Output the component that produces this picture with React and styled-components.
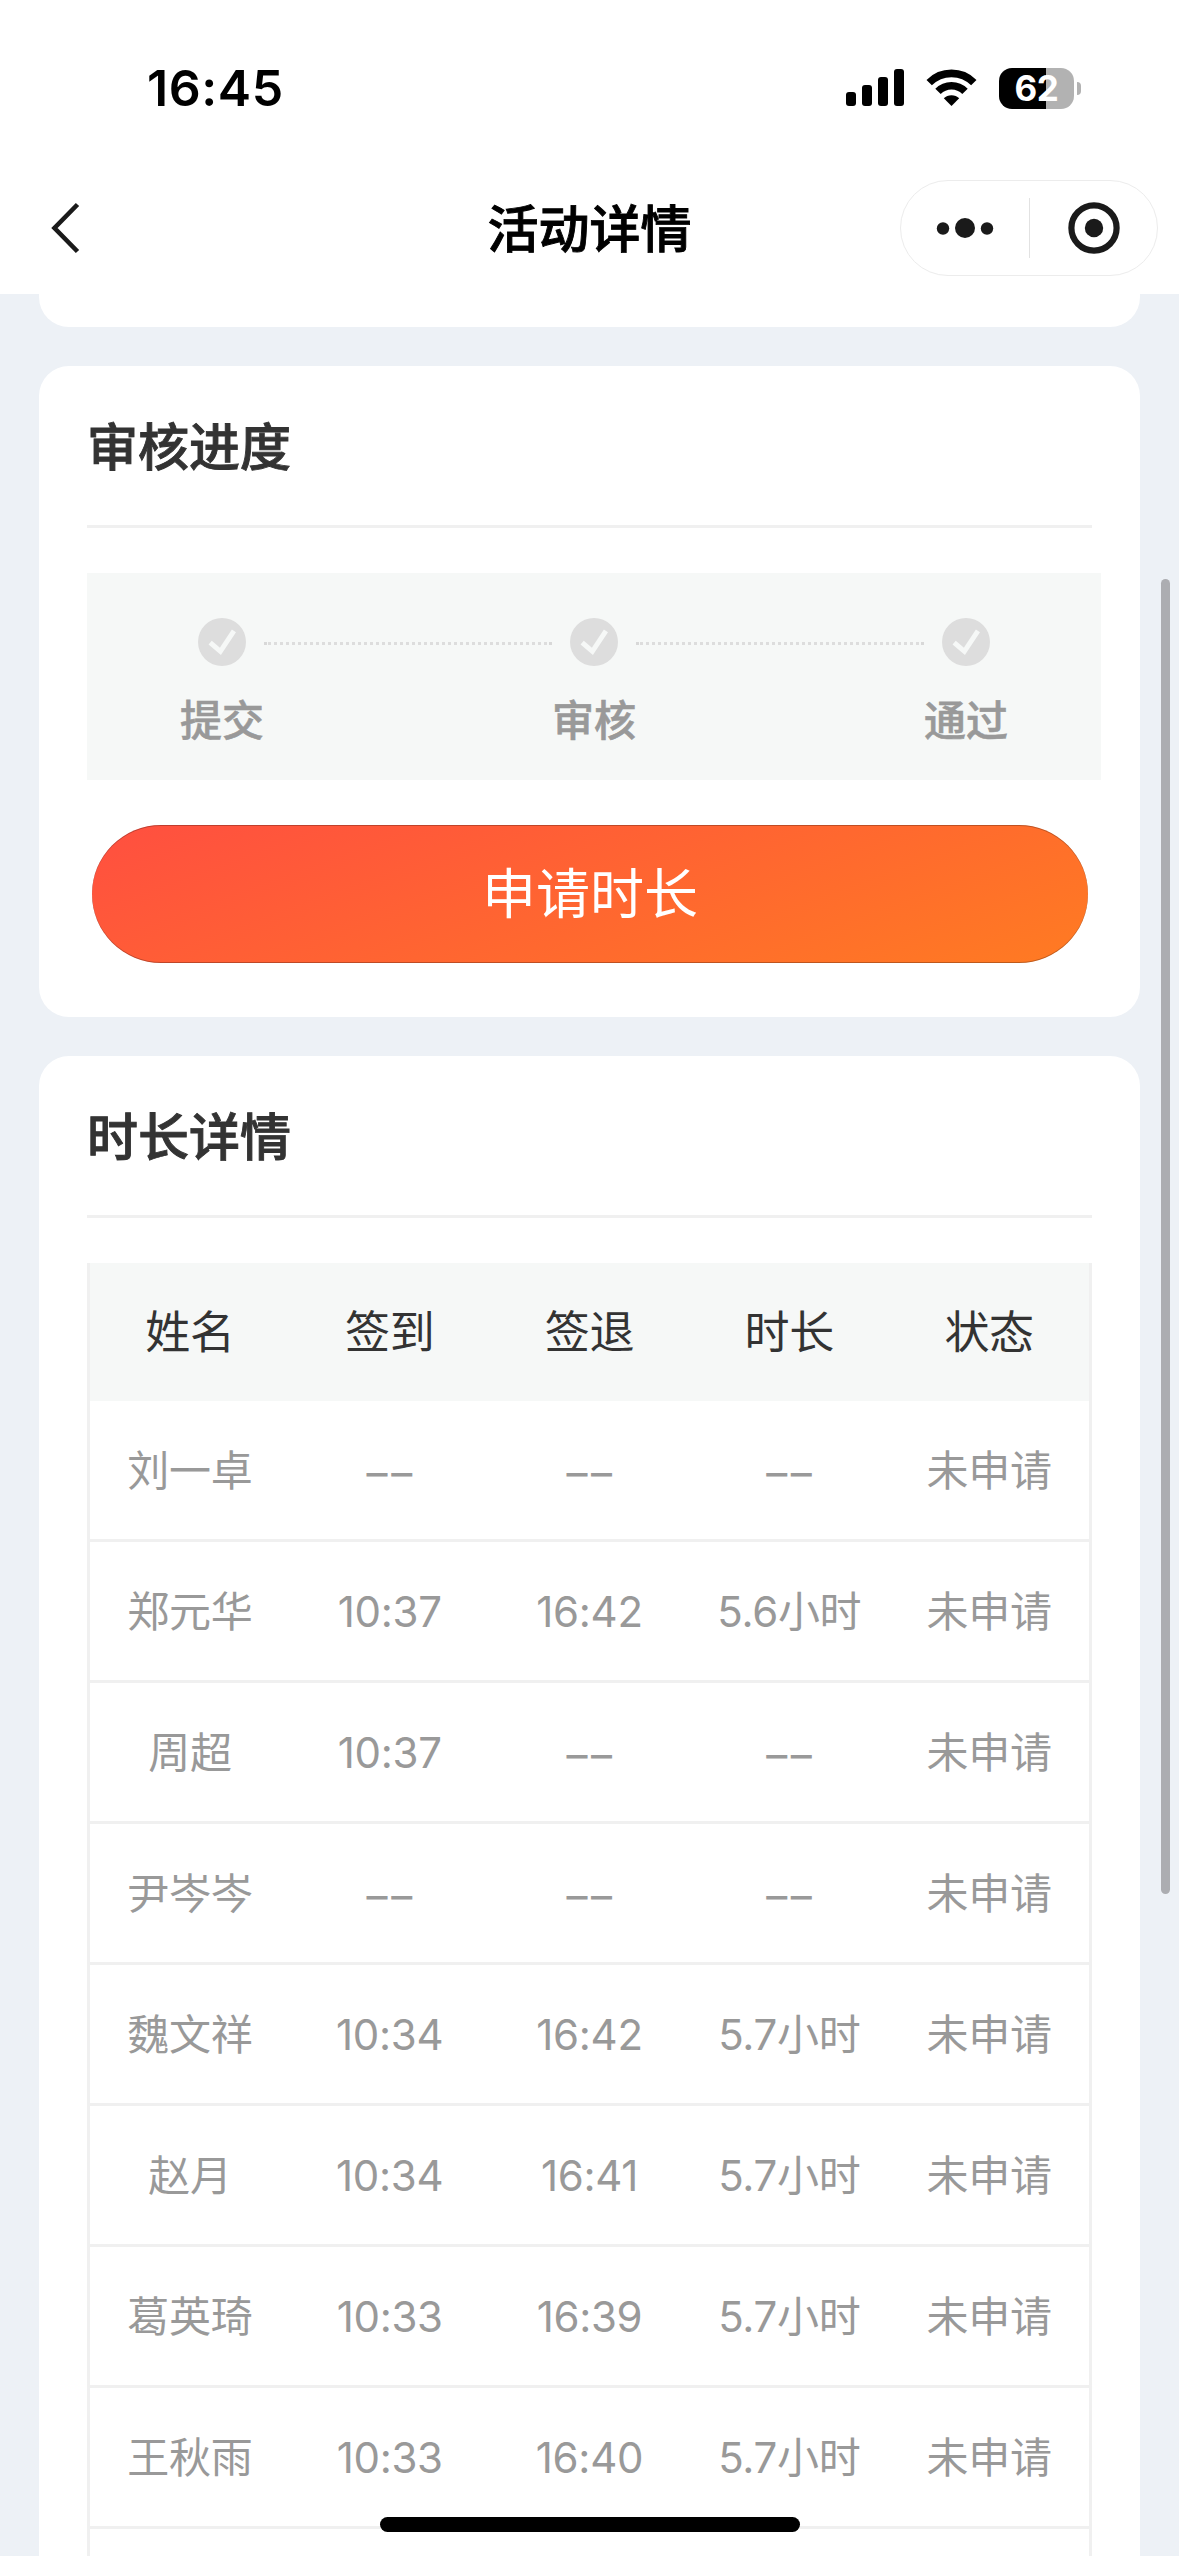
import React from "react";
import styled, { createGlobalStyle } from "styled-components";

const GlobalStyle = createGlobalStyle`
  * { box-sizing: border-box; }
  body {
    margin: 0;
    background: #edf1f6;
    font-family: Inter, "Noto Sans CJK SC", sans-serif;
  }
`;

const Screen = styled.div`
  position: relative;
  width: 1179px;
  height: 2556px;
  overflow: hidden;
  display: flex;
  flex-direction: column;
  background: #edf1f6;
`;

const Header = styled.header`
  flex: none;
  height: 294px;
  background: #fff;
`;

const StatusBar = styled.div`
  display: flex;
  align-items: center;
  justify-content: space-between;
  height: 176px;
  padding: 0 98px 0 147px;
`;

const Clock = styled.span`
  font-size: 50px;
  font-weight: 600;
  line-height: 60px;
  letter-spacing: 0.6px;
  color: #000;
`;

const StatusIcons = styled.div`
  display: flex;
  align-items: center;
  gap: 22px;
`;

const BatteryWrap = styled.div`
  display: flex;
  align-items: center;
  gap: 3px;
`;

const BatteryBody = styled.div`
  width: 75px;
  height: 41px;
  border-radius: 13px;
  display: flex;
  align-items: center;
  justify-content: center;
  background: linear-gradient(90deg, #000 47px, #b2b2b2 47px);
  color: #fff;
  font-size: 35px;
  font-weight: 700;
  line-height: 41px;
  letter-spacing: -0.5px;
`;

const BatteryTip = styled.div`
  width: 4px;
  height: 13px;
  border-radius: 0 4px 4px 0;
  background: #b2b2b2;
`;

const NavBar = styled.nav`
  display: grid;
  grid-template-columns: 1fr auto 1fr;
  align-items: center;
  height: 104px;
  padding: 0 21px;
`;

const BackButton = styled.button`
  display: flex;
  margin-left: 27px;
  padding: 0;
  border: 0;
  background: none;
`;

const NavTitle = styled.h1`
  margin: 0;
  padding-top: 4px;
  font-size: 51px;
  font-weight: 500;
  line-height: 60px;
  color: #000;
  -webkit-text-stroke: 0.9px #000;
`;

const Capsule = styled.div`
  justify-self: end;
  display: flex;
  align-items: center;
  width: 258px;
  height: 96px;
  border: 1px solid #ececec;
  border-radius: 48px;
`;

const CapsuleButton = styled.button`
  flex: 1;
  display: flex;
  align-items: center;
  justify-content: center;
  padding: 0 0 0 1px;
  border: 0;
  background: none;
`;

const CapsuleDivider = styled.span`
  width: 1px;
  height: 60px;
  background: #e2e2e2;
`;

const Content = styled.main`
  flex: 1;
  min-height: 0;
  display: flex;
  flex-direction: column;
  gap: 39px;
  padding: 0 39px;
`;

const Card = styled.section`
  flex: none;
  padding: 0 48px 54px;
  border-radius: 30px;
  background: #fff;
`;

const CardTail = styled.div`
  flex: none;
  height: 33px;
  border-radius: 0 0 30px 30px;
  background: #fff;
`;

const CardTitle = styled.h2`
  height: 162px;
  margin: 0 0 45px;
  border-bottom: 3px solid #f0f0f0;
  font-size: 51px;
  font-weight: 500;
  line-height: 164px;
  color: #333;
  -webkit-text-stroke: 0.9px #333;
`;

const Steps = styled.div`
  display: flex;
  justify-content: center;
  width: 1014px;
  height: 207px;
  padding-top: 45px;
  background: #f6f8f7;
`;

const Step = styled.div`
  display: flex;
  flex-direction: column;
  align-items: center;
  gap: 25px;
  width: 84px;
`;

const StepLabel = styled.span`
  font-size: 42px;
  font-weight: 500;
  line-height: 60px;
  color: #999;
  -webkit-text-stroke: 0.6px #999;
`;

const StepLine = styled.div`
  width: 288px;
  height: 3px;
  margin-top: 24px;
  background:
    linear-gradient(#d8d8d8, #d8d8d8) left / 3px 3px no-repeat,
    linear-gradient(#d8d8d8, #d8d8d8) right / 3px 3px no-repeat,
    repeating-linear-gradient(90deg, #ddd 0 1.5px, transparent 1.5px 4.5px, #ddd 4.5px 6px);
`;

const ApplyButton = styled.button`
  display: block;
  width: 996px;
  height: 138px;
  margin: 45px 0 0 5px;
  padding: 0;
  border: 0;
  border-radius: 69px;
  background: linear-gradient(160deg, #ff4f40, #ff7b22);
  box-shadow:
    inset 0 1px 0 rgba(0, 0, 0, 0.25),
    inset 0 -1px 0 rgba(0, 0, 0, 0.25);
  color: #fff;
  font-family: inherit;
  font-size: 54px;
  line-height: 140px;
`;

const Table = styled.div`
  border: solid #f0f0f0;
  border-width: 0 3px;
`;

const Row = styled.div`
  display: grid;
  grid-template-columns: repeat(5, 1fr);
  height: ${(p) => (p.$head ? 138 : 141)}px;
  border-bottom: ${(p) => (p.$head ? "0" : "3px solid #f0f0f0")};
  background: ${(p) => (p.$head ? "#f6f8f7" : "#fff")};
  color: ${(p) => (p.$head ? "#333" : "#999")};
  font-size: ${(p) => (p.$head ? 45 : 42)}px;
  line-height: 140px;
  text-align: center;
`;

const Cell = styled.span`
  padding: ${(p) => (p.$empty ? "2px 0 0 3px" : "0")};
  letter-spacing: ${(p) => (p.$empty ? "3.6px" : "-0.3px")};
  white-space: nowrap;
`;

const ScrollThumb = styled.div`
  position: absolute;
  top: 579px;
  right: 9px;
  width: 9px;
  height: 1315px;
  border-radius: 5px;
  background: #acadb1;
`;

const HomeIndicator = styled.div`
  position: absolute;
  left: 380px;
  bottom: 24px;
  width: 420px;
  height: 15px;
  border-radius: 8px;
  background: #000;
`;

const SignalIcon = () => (
  <svg width="58" height="38" viewBox="0 0 58 38">
    <rect x="0" y="23" width="10" height="14" rx="3" />
    <rect x="16" y="16" width="10" height="21" rx="3" />
    <rect x="32" y="8" width="10" height="29" rx="3" />
    <rect x="48" y="0" width="10" height="37" rx="3" />
  </svg>
);

const WifiIcon = () => (
  <svg width="51" height="38" viewBox="0 0 51 38">
    <g fill="none" stroke="#000" strokeWidth="7.6">
      <path d="M3.2 13.6 A31.5 31.5 0 0 1 47.8 13.6" />
      <path d="M12 22.4 A19 19 0 0 1 39 22.4" />
    </g>
    <path d="M25.5 37 L17.8 29.3 A11 11 0 0 1 33.2 29.3 Z" />
  </svg>
);

const BackIcon = () => (
  <svg width="34" height="54" viewBox="0 0 34 54">
    <path d="M29.5 3.5 L6.5 27 L29.5 50.5" fill="none" stroke="#1a1a1a" strokeWidth="4.6" />
  </svg>
);

const MoreIcon = () => (
  <svg width="58" height="22" viewBox="0 0 58 22" fill="#1a1a1a">
    <circle cx="7" cy="11.5" r="6.2" />
    <circle cx="29" cy="11" r="10" />
    <circle cx="51" cy="11.5" r="6.2" />
  </svg>
);

const TargetIcon = () => (
  <svg width="52" height="52" viewBox="0 0 52 52">
    <circle cx="26" cy="26" r="22.6" fill="none" stroke="#1a1a1a" strokeWidth="6.2" />
    <circle cx="26" cy="26" r="9.2" fill="#1a1a1a" />
  </svg>
);

const CheckIcon = () => (
  <svg width="48" height="48" viewBox="0 0 48 48">
    <circle cx="24" cy="24" r="24" fill="#ddd" />
    <path
      d="M14 26.2 L22.4 33.4 L34.6 15"
      fill="none"
      stroke="#f6f8f7"
      strokeWidth="4.9"
      strokeLinecap="square"
    />
  </svg>
);

const EMPTY = "––";
const steps = ["提交", "审核", "通过"];
const columns = ["姓名", "签到", "签退", "时长", "状态"];
const records = [
  ["刘一卓", EMPTY, EMPTY, EMPTY, "未申请"],
  ["郑元华", "10:37", "16:42", "5.6小时", "未申请"],
  ["周超", "10:37", EMPTY, EMPTY, "未申请"],
  ["尹岑岑", EMPTY, EMPTY, EMPTY, "未申请"],
  ["魏文祥", "10:34", "16:42", "5.7小时", "未申请"],
  ["赵月", "10:34", "16:41", "5.7小时", "未申请"],
  ["葛英琦", "10:33", "16:39", "5.7小时", "未申请"],
  ["王秋雨", "10:33", "16:40", "5.7小时", "未申请"],
];

export default function App() {
  return (
    <Screen>
      <GlobalStyle />
      <Header>
        <StatusBar>
          <Clock>16:45</Clock>
          <StatusIcons>
            <SignalIcon />
            <WifiIcon />
            <BatteryWrap>
              <BatteryBody>62</BatteryBody>
              <BatteryTip />
            </BatteryWrap>
          </StatusIcons>
        </StatusBar>
        <NavBar>
          <BackButton aria-label="返回">
            <BackIcon />
          </BackButton>
          <NavTitle>活动详情</NavTitle>
          <Capsule>
            <CapsuleButton aria-label="更多">
              <MoreIcon />
            </CapsuleButton>
            <CapsuleDivider />
            <CapsuleButton aria-label="关闭">
              <TargetIcon />
            </CapsuleButton>
          </Capsule>
        </NavBar>
      </Header>
      <Content>
        <CardTail />
        <Card>
          <CardTitle>审核进度</CardTitle>
          <Steps>
            {steps.map((label, i) => (
              <React.Fragment key={label}>
                {i > 0 && <StepLine />}
                <Step>
                  <CheckIcon />
                  <StepLabel>{label}</StepLabel>
                </Step>
              </React.Fragment>
            ))}
          </Steps>
          <ApplyButton>申请时长</ApplyButton>
        </Card>
        <Card>
          <CardTitle>时长详情</CardTitle>
          <Table>
            <Row $head>
              {columns.map((name) => (
                <Cell key={name}>{name}</Cell>
              ))}
            </Row>
            {records.map((record) => (
              <Row key={record[0]}>
                {record.map((value, i) => (
                  <Cell key={i} $empty={value === EMPTY}>
                    {value}
                  </Cell>
                ))}
              </Row>
            ))}
            <Row />
          </Table>
        </Card>
      </Content>
      <ScrollThumb />
      <HomeIndicator />
    </Screen>
  );
}
